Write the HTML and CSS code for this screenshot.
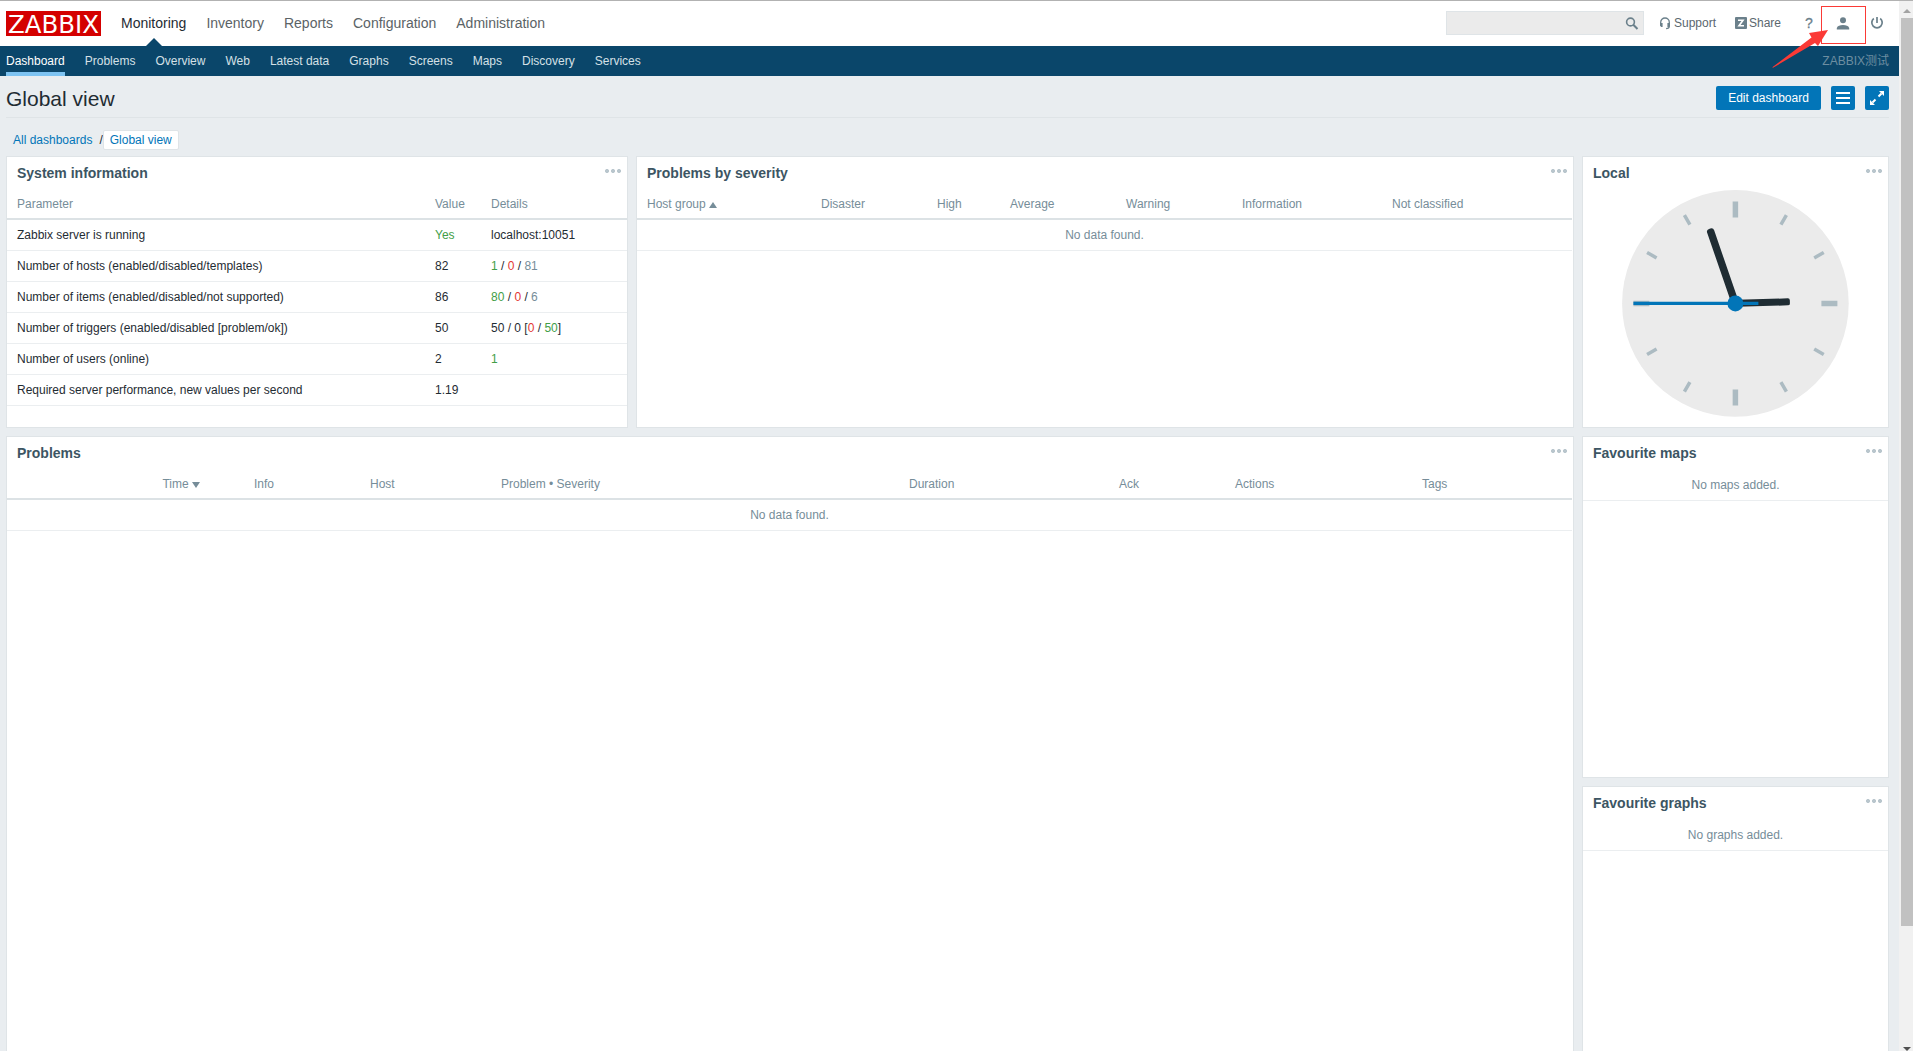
FILE: index.html
```html
<!DOCTYPE html>
<html lang="en">
<head>
<meta charset="utf-8">
<title>Dashboard</title>
<link rel="stylesheet" href="styles.css">
</head>
<body>
<div class="page">
  <header class="top">
    <svg class="logo" width="95" height="25" viewBox="0 0 95 25"><rect width="95" height="25" fill="#d40000"/><text x="2" y="21.500" textLength="91" lengthAdjust="spacingAndGlyphs" class="logo-text">ZABBIX</text></svg>
    <nav class="main-menu">
      <a class="selected">Monitoring</a><a>Inventory</a><a>Reports</a><a>Configuration</a><a>Administration</a>
    </nav>
    <div class="tools">
      <div class="search">
        <svg width="14" height="14" viewBox="0 0 14 14" fill="none" stroke="#6b808b"><circle cx="5.500" cy="5" r="3.900" stroke-width="1.600"/><path d="M8.300 7.800l4.200 4.200" stroke-width="2"/></svg>
      </div>
      <a class="tool support"><svg width="12" height="13" viewBox="0 0 12 13"><path d="M1.700 8V5.300a4.200 4.200 0 0 1 8.600 0V9.500c0 1.500-1 2-3.200 2.200" fill="none" stroke="#6b808b" stroke-width="1.300"/><path d="M1 6h2.600v4H2.200L1 8.800zM11 6H8.400v4h1.400L11 8.800z" fill="#6b808b"/></svg>Support</a>
      <a class="tool share"><svg width="12" height="12" viewBox="0 0 12 12"><rect width="12" height="12" rx="1" fill="#6b808b"/><path d="M3 3.300h5L4 8.700h5" fill="none" stroke="#fff" stroke-width="1.600"/></svg>Share</a>
      <a class="help">?</a>
      <a class="user"><svg width="14" height="13" viewBox="0 0 14 13" fill="#6b808b"><circle cx="7" cy="3.200" r="3"/><path d="M.8 12.500V11C1.500 8.800 4 8 7 8s5.500.8 6.200 3v1.500z"/></svg></a>
      <a class="power"><svg width="14" height="14" viewBox="0 0 14 14" fill="none" stroke="#6b808b" stroke-width="1.700"><path d="M7 1v6M3.800 2.500a5.200 5.200 0 1 0 6.400 0"/></svg></a>
    </div>
    <svg class="pointer" width="102" height="66" viewBox="0 0 102 66"><rect x="49.500" y="1.500" width="44" height="37" fill="none" stroke="#fb3a36"/><path d="M.3 62.300L39.500 32.500 37 28 56 25 46 41 43 38 1 62.800z" fill="#fb3a36"/></svg>
  </header>
  <nav class="sub-menu">
    <a class="selected">Dashboard</a><a>Problems</a><a>Overview</a><a>Web</a><a>Latest data</a><a>Graphs</a><a>Screens</a><a>Maps</a><a>Discovery</a><a>Services</a>
    <span class="server-name">ZABBIX测试</span>
  </nav>
  <main>
    <div class="title-row">
      <h1>Global view</h1>
      <button class="edit">Edit dashboard</button>
      <button class="icon-btn"><svg width="24" height="24" viewBox="0 0 24 24" fill="none" stroke="#fff" stroke-width="2"><path d="M5 7h14M5 12h14M5 17h14"/></svg></button>
      <button class="icon-btn"><svg width="24" height="24" viewBox="0 0 24 24" fill="#fff" stroke="#fff"><path d="M14 5h5v5zM5 14v5h5z" stroke="none"/><path d="M13.500 10.500l3-3M10.500 13.500l-3 3" stroke-width="2"/></svg></button>
    </div>
    <div class="crumbs"><a>All dashboards</a><span>/</span><a class="current">Global view</a></div>
    <div class="dashboard">
      <section class="widget">
        <h4>System information</h4><i class="dots"></i>
        <table>
          <colgroup><col class="w-param"><col class="w-value"><col></colgroup>
          <thead><tr><th>Parameter</th><th>Value</th><th>Details</th></tr></thead>
          <tbody>
            <tr><td>Zabbix server is running</td><td class="green">Yes</td><td>localhost:10051</td></tr>
            <tr><td>Number of hosts (enabled/disabled/templates)</td><td>82</td><td><b class="green">1</b> / <b class="red">0</b> / <b class="grey">81</b></td></tr>
            <tr><td>Number of items (enabled/disabled/not supported)</td><td>86</td><td><b class="green">80</b> / <b class="red">0</b> / <b class="grey">6</b></td></tr>
            <tr><td>Number of triggers (enabled/disabled [problem/ok])</td><td>50</td><td>50 / 0 [<b class="red">0</b> / <b class="green">50</b>]</td></tr>
            <tr><td>Number of users (online)</td><td>2</td><td class="green">1</td></tr>
            <tr><td>Required server performance, new values per second</td><td>1.19</td><td></td></tr>
          </tbody>
        </table>
      </section>
      <section class="widget inset">
        <h4>Problems by severity</h4><i class="dots"></i>
        <table>
          <colgroup><col class="w-group"><col class="w-disaster"><col class="w-high"><col class="w-average"><col class="w-warning"><col class="w-info"><col></colgroup>
          <thead><tr><th>Host group <i class="up"></i></th><th>Disaster</th><th>High</th><th>Average</th><th>Warning</th><th>Information</th><th>Not classified</th></tr></thead>
          <tbody><tr><td class="empty" colspan="7">No data found.</td></tr></tbody>
        </table>
      </section>
      <section class="widget">
        <h4>Local</h4><i class="dots"></i>
        <svg class="clock" width="228" height="228" viewBox="-114.400 -113.400 228 228">
          <circle r="113.300" fill="#ebebeb"/>
          <g stroke="#acbbc2" stroke-width="5.500"><path d="M0-102v16M0 102V86M102 0H86M-102 0h16"/></g>
          <g stroke="#acbbc2" stroke-width="3.500"><path d="M0-102v11M0 102V91" transform="rotate(30)"/><path d="M0-102v11M0 102V91" transform="rotate(60)"/><path d="M0-102v11M0 102V91" transform="rotate(120)"/><path d="M0-102v11M0 102V91" transform="rotate(150)"/></g>
          <rect x="-3.500" y="-54.500" width="7" height="54.500" rx="2" fill="#1f2c33" transform="rotate(88.300)"/>
          <rect x="-3.700" y="-79" width="7.400" height="79" rx="3" fill="#1f2c33" transform="rotate(-19)"/>
          <path d="M-102 0H23" stroke="#0275b8" stroke-width="3.400"/>
          <circle r="8" fill="#0275b8"/>
        </svg>
      </section>
      <section class="widget wide inset">
        <h4>Problems</h4><i class="dots"></i>
        <table>
          <colgroup><col class="w-time"><col class="w-line"><col class="w-pinfo"><col class="w-host"><col class="w-problem"><col class="w-duration"><col class="w-ack"><col class="w-actions"><col></colgroup>
          <thead><tr><th class="right">Time <i class="down"></i></th><th></th><th>Info</th><th>Host</th><th>Problem • Severity</th><th>Duration</th><th>Ack</th><th>Actions</th><th>Tags</th></tr></thead>
          <tbody><tr><td class="empty" colspan="9">No data found.</td></tr></tbody>
        </table>
      </section>
      <section class="widget"><h4>Favourite maps</h4><i class="dots"></i><p class="none">No maps added.</p></section>
      <section class="widget"><h4>Favourite graphs</h4><i class="dots"></i><p class="none">No graphs added.</p></section>
    </div>
  </main>
</div>
<aside class="scrollbar"><i class="up"></i><div class="thumb"></div><i class="down"></i></aside>
</body>
</html>
```
FILE: styles.css
```css
* { box-sizing: border-box; }
body {
  margin: 0;
  height: 1051px;
  display: flex;
  overflow: hidden;
  border-top: 1px solid #b2b2b2;
  background: #e9edf0;
  color: #1f2c33;
  font: 12px/14px "Liberation Sans", "Noto Sans CJK SC", sans-serif;
}
.page { flex: 1; min-width: 0; display: flex; flex-direction: column; }
i, b { font-style: normal; font-weight: normal; }

.top {
  position: relative;
  height: 45px;
  background: #fff;
  display: flex;
  align-items: flex-start;
  padding: 10px 10px 0 6px;
}
.logo { overflow: visible; }
.logo-text { font: 24.5px "DejaVu Sans", sans-serif; fill: #fff; }
.main-menu { display: flex; gap: 20px; margin: 0 0 0 20px; font-size: 14px; line-height: 25px; color: #5b6366; }
.main-menu .selected { color: #1f2c33; position: relative; }
.main-menu .selected::after {
  content: "";
  position: absolute;
  left: 50%;
  top: 27px;
  margin-left: -8px;
  border: 8px solid transparent;
  border-top: 0;
  border-bottom-color: #0a466a;
}
.tools { margin-left: auto; display: flex; align-items: flex-start; color: #5b676e; line-height: 24px; }
.search {
  width: 198px;
  height: 24px;
  border: 1px solid #dfe4e7;
  background: #ebebeb;
  display: flex;
  justify-content: flex-end;
  padding: 5px 4px;
  margin-right: 15px;
}
.tool { display: flex; align-items: center; gap: 3px; }
.support { width: 76px; }
.share { width: 70px; gap: 2px; }
.help { width: 31px; font-size: 14px; color: #6b808b; -webkit-text-stroke: .3px #6b808b; }
.user { width: 34px; height: 24px; padding-top: 6px; }
.power { width: 19px; height: 24px; padding-top: 5px; }
.user svg, .power svg { display: block; }
.pointer { position: absolute; left: 1772px; top: 4px; }

.sub-menu { height: 30px; background: #0a466a; display: flex; gap: 20px; padding: 0 10px 0 6px; line-height: 30px; color: #d5e0e6; }
.sub-menu .selected { color: #fff; border-bottom: 4px solid #7dc3f2; }
.server-name { margin-left: auto; color: #6d8ea1; }

main { flex: 1; min-height: 0; padding: 0 10px 0 6px; display: flex; flex-direction: column; }
.title-row { flex: none; height: 42px; display: flex; gap: 10px; align-items: flex-start; padding-top: 10px; border-bottom: 1px solid #dfe4e7; }
h1 { margin: 0 auto 0 0; font-size: 21px; font-weight: normal; line-height: 26px; }
button { font: inherit; height: 24px; border: 0; border-radius: 2px; padding: 0; background: #0275b8; color: #fff; }
.edit { width: 105px; }
.icon-btn { width: 24px; }
.icon-btn svg { display: block; }
.crumbs { flex: none; height: 38px; display: flex; align-items: flex-start; padding: 12px 0 0 7px; line-height: 21px; }
.crumbs a { color: #0275b8; }
.crumbs span { margin: 0 0 0 7px; }
.crumbs .current { padding: 0 6px; background: #fff; border: 1px solid #dfe4e7; border-radius: 2px; line-height: 18px; }

.dashboard { flex: 1; min-height: 0; display: grid; grid-template-columns: 622px 938px 307px; grid-template-rows: 272px 342px 1fr; gap: 8px; }
.widget { position: relative; min-height: 0; background: #fff; border: 1px solid #dfe4e7; }
.dashboard .widget:last-child { border-bottom: 0; }
.wide { grid-column: 1 / 3; grid-row: 2 / 4; border-bottom: 0; }
.inset { padding-right: 1px; }
h4 { margin: 0; padding: 8px 10px 0; height: 31px; font-size: 14px; line-height: 16px; color: #3c5563; }
.dots {
  position: absolute;
  right: 6px;
  top: 12px;
  width: 16px;
  height: 4px;
  background: radial-gradient(circle at 2px 2px, #b9c6cd 1.7px, transparent 2.3px) 0 0 / 6px 4px;
}
table { width: 100%; table-layout: fixed; border-collapse: separate; border-spacing: 0; }
th, td { padding: 0 0 0 5px; text-align: left; font-weight: normal; white-space: nowrap; }
th { height: 32px; padding-top: 2px; color: #768d99; border-bottom: 2px solid #dce2e5; }
td { height: 31px; border-bottom: 1px solid #ebeef0; }
th:first-child, td:first-child { padding-left: 10px; }
td.empty:first-child { text-align: center; color: #768d99; padding: 0; }
th.right { text-align: right; padding-right: 5px; }
.up, .down { display: inline-block; border: 4px solid transparent; }
.up { border-top: 0; border-bottom: 6px solid #768d99; }
.down { border-bottom: 0; border-top: 6px solid #768d99; }
.green { color: #429e47; }
.red { color: #e33734; }
.grey { color: #768d99; }
.w-param { width: 423px; }
.w-value { width: 56px; }
.w-group { width: 179px; }
.w-disaster { width: 116px; }
.w-high { width: 73px; }
.w-average { width: 116px; }
.w-warning { width: 116px; }
.w-info { width: 150px; }
.w-time { width: 198px; }
.w-line { width: 44px; }
.w-pinfo { width: 116px; }
.w-host { width: 131px; }
.w-problem { width: 408px; }
.w-duration { width: 210px; }
.w-ack { width: 116px; }
.w-actions { width: 187px; }
.clock { display: block; margin: 2px 0 0 38px; }
.none { margin: 0; height: 33px; line-height: 35px; text-align: center; color: #768d99; border-bottom: 1px solid #ebeef0; }

.scrollbar { width: 14px; background: #f1f1f1; padding-left: 2px; display: flex; flex-direction: column; align-items: center; }
.scrollbar .up { margin: 8px 0 5px; border-bottom: 4px solid #a3a3a3; }
.scrollbar .down { margin: auto 0 0; border-top: 4px solid #505050; }
.thumb { width: 100%; height: 908px; background: #c1c1c1; }
```
